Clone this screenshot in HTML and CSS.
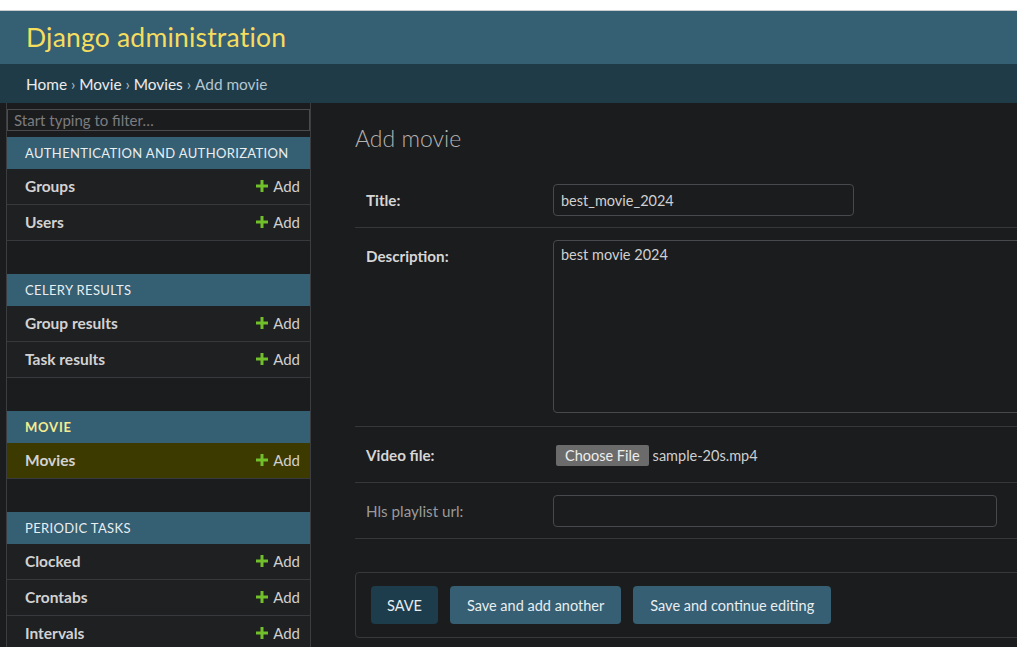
FILE: index.html
```html
<!DOCTYPE html>
<html>
<head>
<meta charset="utf-8">
<link rel="stylesheet" href="styles.css">
</head>
<body>
<div class="strip"></div>
<header class="header"><span class="brand">Django administration</span></header>
<nav class="crumbs"><a>Home</a> › <a>Movie</a> › <a>Movies</a> › <span class="cur">Add movie</span></nav>
<div class="main">
  <div class="toggle"></div>
  <aside class="sidebar">
    <div class="filter"><input class="filter-input" placeholder="Start typing to filter…"></div>
    <div class="module">
      <div class="caption">Authentication and Authorization</div>
      <div class="row"><span class="model">Groups</span><span class="add"><svg width="12" height="12" viewBox="0 0 12 12"><path d="M4.5 0h3v4.5H12v3H7.5V12h-3V7.5H0v-3h4.5z" fill="#70bf2b"/></svg>Add</span></div>
      <div class="row"><span class="model">Users</span><span class="add"><svg width="12" height="12" viewBox="0 0 12 12"><path d="M4.5 0h3v4.5H12v3H7.5V12h-3V7.5H0v-3h4.5z" fill="#70bf2b"/></svg>Add</span></div>
    </div>
    <div class="module">
      <div class="caption">Celery Results</div>
      <div class="row"><span class="model">Group results</span><span class="add"><svg width="12" height="12" viewBox="0 0 12 12"><path d="M4.5 0h3v4.5H12v3H7.5V12h-3V7.5H0v-3h4.5z" fill="#70bf2b"/></svg>Add</span></div>
      <div class="row"><span class="model">Task results</span><span class="add"><svg width="12" height="12" viewBox="0 0 12 12"><path d="M4.5 0h3v4.5H12v3H7.5V12h-3V7.5H0v-3h4.5z" fill="#70bf2b"/></svg>Add</span></div>
    </div>
    <div class="module">
      <div class="caption current">Movie</div>
      <div class="row selected"><span class="model">Movies</span><span class="add"><svg width="12" height="12" viewBox="0 0 12 12"><path d="M4.5 0h3v4.5H12v3H7.5V12h-3V7.5H0v-3h4.5z" fill="#70bf2b"/></svg>Add</span></div>
    </div>
    <div class="module">
      <div class="caption">Periodic Tasks</div>
      <div class="row"><span class="model">Clocked</span><span class="add"><svg width="12" height="12" viewBox="0 0 12 12"><path d="M4.5 0h3v4.5H12v3H7.5V12h-3V7.5H0v-3h4.5z" fill="#70bf2b"/></svg>Add</span></div>
      <div class="row"><span class="model">Crontabs</span><span class="add"><svg width="12" height="12" viewBox="0 0 12 12"><path d="M4.5 0h3v4.5H12v3H7.5V12h-3V7.5H0v-3h4.5z" fill="#70bf2b"/></svg>Add</span></div>
      <div class="row"><span class="model">Intervals</span><span class="add"><svg width="12" height="12" viewBox="0 0 12 12"><path d="M4.5 0h3v4.5H12v3H7.5V12h-3V7.5H0v-3h4.5z" fill="#70bf2b"/></svg>Add</span></div>
    </div>
  </aside>
  <section class="content">
    <h1 class="title">Add movie</h1>
    <div class="form">
      <div class="frow">
        <label class="label req">Title:</label>
        <input class="text-input w-title" value="best_movie_2024">
      </div>
      <div class="frow">
        <label class="label req">Description:</label>
        <textarea class="textarea">best movie 2024</textarea>
      </div>
      <div class="frow">
        <label class="label req">Video file:</label>
        <div class="file"><span class="file-btn">Choose File</span><span class="file-name">sample-20s.mp4</span></div>
      </div>
      <div class="frow">
        <label class="label">Hls playlist url:</label>
        <input class="text-input w-url" value="">
      </div>
    </div>
    <div class="submit-row">
      <span class="btn btn-default">SAVE</span>
      <span class="btn">Save and add another</span>
      <span class="btn">Save and continue editing</span>
    </div>
  </section>
</div>
</body>
</html>
```

FILE: styles.css
```css
html, body {
  margin: 0;
  padding: 0;
  overflow: hidden;
}
body {
  background: #1b1c1e;
  font-family: Lato, "Open Sans", sans-serif;
  font-size: 14px;
  color: #d0d0d0;
  height: 647px;
}
.strip {
  height: 10px;
  background: #ffffff;
  border-bottom: 1px solid #c9cdd0;
}
.header {
  height: 53px;
  background: #355f73;
  display: flex;
  align-items: center;
  padding: 0 26px 2px;
  box-sizing: border-box;
}
.brand {
  color: #f5dd5d;
  font-size: 26.5px;
  font-weight: 400;
  letter-spacing: 0.2px;
}
.crumbs {
  height: 39px;
  background: #203b48;
  display: flex;
  align-items: center;
  padding: 0 26px;
  color: #a9c2ce;
  font-size: 15.4px;
  white-space: pre;
}
.crumbs a {
  color: #ececec;
}
.crumbs .cur {
  color: #b3c7d1;
}
.main {
  display: flex;
  align-items: flex-start;
  overflow: hidden;
  height: 544px;
}
.toggle {
  width: 6px;
  flex: none;
  align-self: stretch;
  border-right: 1px solid #3b3d40;
}
.sidebar {
  width: 303px;
  flex: none;
  align-self: stretch;
  border-right: 1px solid #3b3d40;
}
.filter {
  padding: 6px 0 6px;
}
.filter-input {
  box-sizing: border-box;
  width: 303px;
  height: 22px;
  margin: 0;
  background: #1b1c1e;
  border: 1px solid #4a4c4f;
  color: #ccc;
  font-family: Lato, "Open Sans", sans-serif;
  font-size: 15px;
  padding: 0 6px;
  display: block;
}
.filter-input::placeholder {
  color: #7b7d80;
}
.module {
  margin-bottom: 33px;
}
.caption {
  height: 32px;
  background: #355f73;
  color: #e9eef1;
  font-size: 13px;
  text-transform: uppercase;
  letter-spacing: 0.35px;
  display: flex;
  align-items: center;
  padding-left: 18px;
}
.caption.current {
  color: #f5eb8f;
  font-weight: 700;
  letter-spacing: 0.8px;
}
.row {
  height: 35px;
  box-sizing: border-box;
  height: 36px;
  padding-bottom: 2px;
  border-bottom: 1px solid #38393c;
  background: #1f2022;
  display: flex;
  align-items: center;
  justify-content: space-between;
  padding-left: 18px;
  padding-right: 10px;
}
.row.selected {
  background: #3d3a00;
}
.model {
  font-weight: 700;
  color: #d2d2d2;
  font-size: 15.5px;
}
.add {
  display: flex;
  align-items: center;
  gap: 5px;
  color: #cfcfcf;
  font-size: 15px;
}
.content {
  flex: none;
  width: 760px;
  padding: 0 0 0 44px;
}
.title {
  margin: 20px 0 0;
  height: 49px;
  font-size: 23px;
  font-weight: 300;
  color: #b3b3b3;
  line-height: 30px;
}
.frow {
  display: flex;
  align-items: flex-start;
  padding: 12px 0 11px 11px;
  border-bottom: 1px solid #35373a;
}
.label {
  width: 187px;
  flex: none;
  height: 32px;
  line-height: 33px;
  color: #9a9a9a;
  font-size: 15.2px;
}
.label.req {
  font-weight: 700;
  color: #d6d6d6;
}
.text-input {
  box-sizing: border-box;
  height: 32px;
  margin: 0;
  background: #1b1c1e;
  border: 1px solid #47494c;
  border-radius: 4px;
  color: #d0d0d0;
  font-family: Lato, "Open Sans", sans-serif;
  font-size: 14.5px;
  padding: 0 7px;
}
.w-title { width: 301px; }
.w-url { width: 444px; }
.textarea {
  box-sizing: border-box;
  width: 610px;
  height: 173px;
  margin: 0 0 2px;
  background: #1b1c1e;
  border: 1px solid #47494c;
  border-radius: 4px;
  color: #d0d0d0;
  font-family: Lato, "Open Sans", sans-serif;
  font-size: 14.5px;
  padding: 5px 7px;
  resize: none;
  display: block;
}
.file {
  height: 32px;
  display: flex;
  align-items: center;
  padding-left: 3px;
}
.file-btn {
  background: #6b6b6b;
  color: #eeeeee;
  font-size: 14.5px;
  height: 21px;
  line-height: 21px;
  padding: 0 9px;
  border-radius: 2px;
}
.file-name {
  margin-left: 4px;
  color: #cfcfcf;
  font-size: 14.5px;
}
.submit-row {
  margin-top: 33px;
  border: 1px solid #37393c;
  border-radius: 4px;
  padding: 13px 15px;
  display: flex;
  gap: 12px;
}
.btn {
  height: 38px;
  display: flex;
  align-items: center;
  padding: 0 17px;
  background: #365f73;
  color: #e8eef1;
  border-radius: 4px;
  font-size: 14.5px;
}
.btn-default {
  background: #1d3c4c;
  padding: 0 16px;
}
```
